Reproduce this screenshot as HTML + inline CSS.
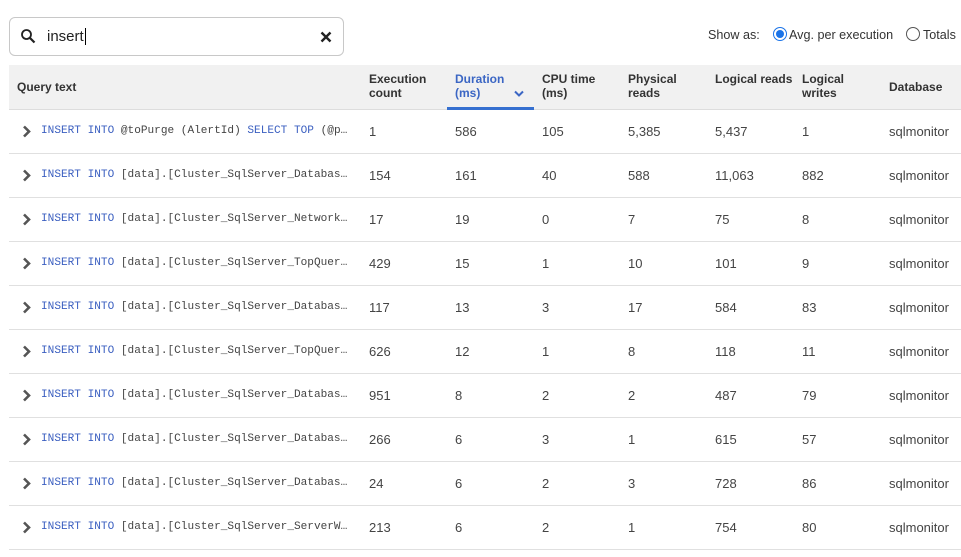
<!DOCTYPE html>
<html><head><meta charset="utf-8"><style>
body{margin:0;width:961px;height:557px;background:#fff;font-family:"Liberation Sans",Arial,sans-serif;color:#3c3c3c;position:relative;overflow:hidden}
.search{position:absolute;left:9px;top:17px;width:333px;height:37px;border:1px solid #c8c8c8;border-radius:6px}
.search .txt{position:absolute;left:37px;top:10px;font-size:15px;color:#222}
.show{position:absolute;top:28px;font-size:12.6px;color:#333}
.radio{position:absolute;top:27px;width:12px;height:12px;border:1px solid #555;border-radius:50%}
.hdr{position:absolute;left:9px;top:65px;width:952px;height:44px;background:#f1f1f1;border-bottom:1px solid #ddd}
.h{position:absolute;font-size:12px;font-weight:bold;color:#333;line-height:14px}
.row{position:absolute;left:9px;width:952px;height:43px;border-bottom:1px solid #e0e0e0}
.c{position:absolute;top:14px;font-size:13px;color:#444}
.q{position:absolute;left:32px;top:15px;font-family:"Liberation Mono",monospace;font-size:11.1px;color:#444;white-space:pre}
.k{color:#3b5fc0}
.chev{position:absolute;left:13px;top:15px}
</style></head><body>
<div class="search">
<svg style="position:absolute;left:10px;top:10px" width="16" height="16" viewBox="0 0 16 16"><circle cx="6.5" cy="6.5" r="4.5" fill="none" stroke="#222" stroke-width="1.8"/><path d="M10 10l4.5 4.5" stroke="#222" stroke-width="2.2"/></svg>
<span class="txt">insert<span style="border-left:1px solid #000;margin-left:1px"></span></span>
<svg style="position:absolute;left:310px;top:13px" width="12" height="12" viewBox="0 0 12 12"><path d="M1.5 1.5l9 9M10.5 1.5l-9 9" stroke="#222" stroke-width="2.4"/></svg>
</div>
<span class="show" style="left:708px">Show as:</span>
<div class="radio" style="left:773px;border-color:#1a73e8"><div style="position:absolute;left:2px;top:2px;width:8px;height:8px;border-radius:50%;background:#1a73e8"></div></div>
<span class="show" style="left:789px">Avg. per execution</span>
<div class="radio" style="left:906px"></div>
<span class="show" style="left:923px">Totals</span>
<div class="hdr">
<div class="h" style="left:8px;top:15px">Query text</div>
<div class="h" style="left:360px;top:7px">Execution<br>count</div>
<div class="h" style="left:446px;top:7px;color:#3b66c4">Duration<br>(ms)</div>
<svg style="position:absolute;left:505px;top:25px" width="10" height="7" viewBox="0 0 10 7"><path d="M1 1.5l4 4 4-4" fill="none" stroke="#3b66c4" stroke-width="2"/></svg>
<div style="position:absolute;left:438px;top:42px;width:87px;height:3px;background:#3670d0"></div>
<div class="h" style="left:533px;top:7px">CPU time<br>(ms)</div>
<div class="h" style="left:619px;top:7px">Physical<br>reads</div>
<div class="h" style="left:706px;top:7px">Logical reads</div>
<div class="h" style="left:793px;top:7px">Logical<br>writes</div>
<div class="h" style="left:880px;top:15px">Database</div>
</div>
<div id="rows"></div>
<script>
var d=[["@toPurge (AlertId) SELECT TOP (@p…",1,586,105,"5,385","5,437",1],
["[data].[Cluster_SqlServer_Databas…",154,161,40,588,"11,063",882],
["[data].[Cluster_SqlServer_Network…",17,19,0,7,75,8],
["[data].[Cluster_SqlServer_TopQuer…",429,15,1,10,101,9],
["[data].[Cluster_SqlServer_Databas…",117,13,3,17,584,83],
["[data].[Cluster_SqlServer_TopQuer…",626,12,1,8,118,11],
["[data].[Cluster_SqlServer_Databas…",951,8,2,2,487,79],
["[data].[Cluster_SqlServer_Databas…",266,6,3,1,615,57],
["[data].[Cluster_SqlServer_Databas…",24,6,2,3,728,86],
["[data].[Cluster_SqlServer_ServerW…",213,6,2,1,754,80]];
var xs=[360,446,533,619,706,793],h="";
d.forEach(function(r,i){
var q=r[0].startsWith("@")?'<span class="k">INSERT INTO</span> @toPurge (AlertId) <span class="k">SELECT TOP</span> (@p…':'<span class="k">INSERT INTO</span> '+r[0];
h+='<div class="row" style="top:'+(110+i*44)+'px"><svg class="chev" width="9" height="13" viewBox="0 0 9 13"><path d="M2 1.5l5 5-5 5" fill="none" stroke="#555" stroke-width="2.6"/></svg><span class="q">'+q+'</span>';
for(var j=1;j<7;j++)h+='<span class="c" style="left:'+xs[j-1]+'px">'+r[j]+'</span>';
h+='<span class="c" style="left:880px">sqlmonitor</span></div>';});
document.getElementById("rows").innerHTML=h;
</script>
</body></html>
